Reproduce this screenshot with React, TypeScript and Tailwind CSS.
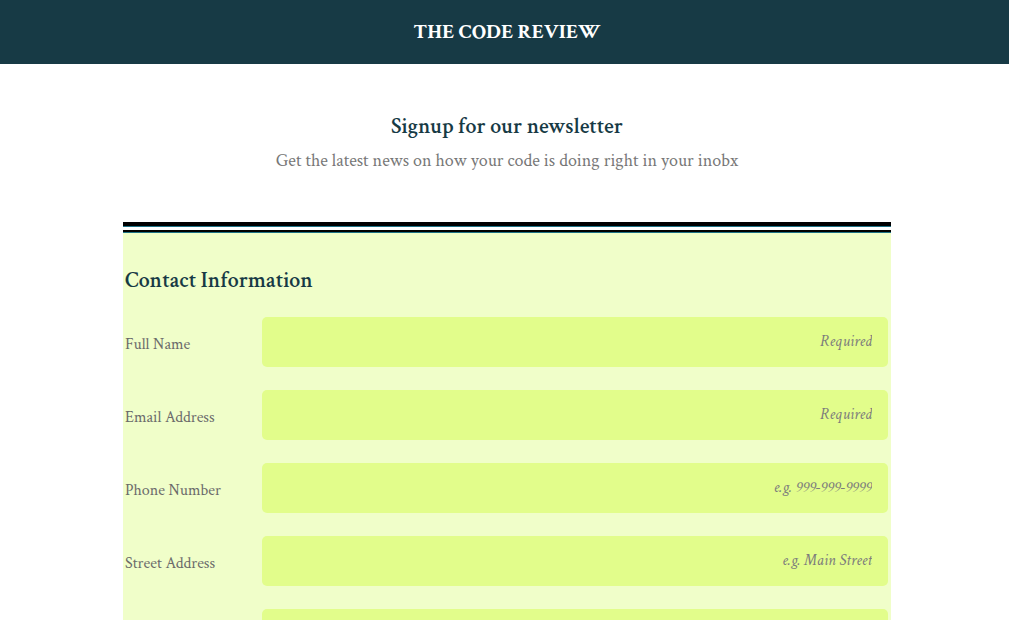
type Field = { id: string; label?: string; hint?: string; type: string };

const fields: Field[] = [
  { id: "name", label: "Full Name", hint: "Required", type: "text" },
  { id: "email", label: "Email Address", hint: "Required", type: "email" },
  { id: "phone", label: "Phone Number", hint: "e.g. 999-999-9999", type: "tel" },
  { id: "street", label: "Street Address", hint: "e.g. Main Street", type: "text" },
  { id: "city", type: "text" },
];

export default function App() {
  return (
    <div className="h-screen overflow-hidden bg-white font-['Crimson_Text','Liberation_Serif',serif] text-[#6b6b6b]">
      <header className="flex h-16 items-center justify-center bg-[#173a45] pl-[5px]">
        <h1 className="text-[21px] leading-6 font-bold text-white">THE CODE REVIEW</h1>
      </header>
      <main className="pl-[5px]">
        <section className="pt-12 pb-[45px] text-center">
          <h2 className="text-[22px] leading-[30px] font-semibold text-[#173a45]">Signup for our newsletter</h2>
          <p className="mt-[3px] text-[18px] leading-8 text-[#777777]">
            Get the latest news on how your code is doing right in your inobx
          </p>
        </section>
        <form className="mx-auto max-w-3xl bg-[#f0fec9]">
          <div className="border-b border-[#1f7386] bg-black pt-1" />
          <div className="h-[3px] bg-white" />
          <div className="border-b border-[#1f7386] bg-black pt-[2px]" />
          <div className="pr-[3px] pl-[2px]">
            <h2 className="pt-[34px] pb-[22px] text-[22px] leading-7 font-semibold text-[#173a45]">
              Contact Information
            </h2>
            <div className="flex flex-col gap-[23px]">
              {fields.map((f) => (
                <div key={f.id} className="flex items-center">
                  <div className="w-[137px] shrink-0 pt-[6px] text-[16px] leading-6">
                    {f.label && <label htmlFor={f.id}>{f.label}</label>}
                  </div>
                  <input
                    id={f.id}
                    type={f.type}
                    placeholder={f.hint}
                    aria-label={f.label ? undefined : "City"}
                    className="h-[50px] min-w-0 flex-1 rounded-[5px] bg-[#e2fd8b] px-4 pb-[2px] text-right text-[16px] placeholder:text-[#7c7c7c] placeholder:italic"
                  />
                </div>
              ))}
            </div>
          </div>
        </form>
      </main>
    </div>
  );
}
